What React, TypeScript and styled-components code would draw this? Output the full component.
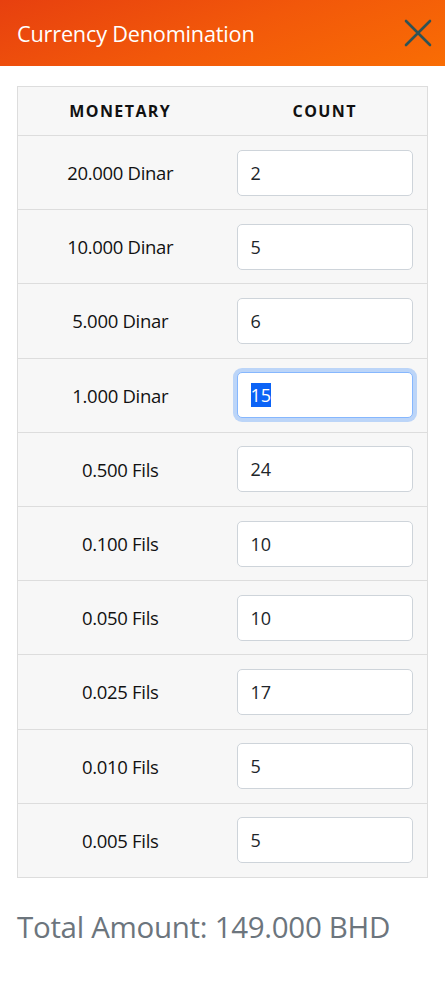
import React, { useEffect, useRef, useState } from 'react';
import styled, { createGlobalStyle } from 'styled-components';

const GlobalStyle = createGlobalStyle`
  * { box-sizing: border-box; }
  body {
    margin: 0;
    background: #ffffff;
    font-family: 'Open Sans', 'Noto Sans', sans-serif;
    color: #212529;
  }
`;

const Page = styled.div`
  width: 445px;
  min-height: 983px;
  background: #ffffff;
`;

const Header = styled.header`
  height: 66px;
  display: flex;
  align-items: center;
  justify-content: space-between;
  padding: 0 12px 0 17px;
  background: linear-gradient(160deg, #e7400f 0%, #f2580a 50%, #f96d04 100%);
`;

const Title = styled.h1`
  margin: 0;
  font-size: 21.7px;
  font-weight: 400;
  color: #ffffff;
  letter-spacing: -0.2px;
`;

const CloseButton = styled.button`
  background: transparent;
  border: none;
  padding: 0;
  width: 30px;
  height: 30px;
  display: flex;
  align-items: center;
  justify-content: center;
  cursor: pointer;
`;

const Body = styled.main`
  padding: 20px 17px 0;
`;

const Table = styled.table`
  width: 100%;
  border-collapse: collapse;
  border: 1px solid #dddddd;
  background: #f7f7f7;
`;

const HeadCell = styled.th`
  height: 49px;
  width: 50%;
  text-align: center;
  font-size: 16px;
  font-weight: 700;
  letter-spacing: 1.4px;
  color: #111111;
  border-bottom: 1px solid #dddddd;
`;

const Row = styled.tr`
  height: 74.2px;
  border-bottom: 1px solid #dddddd;
`;

const LabelCell = styled.td`
  text-align: center;
  font-size: 18.5px;
  color: #111111;
  letter-spacing: -0.3px;
`;

const InputCell = styled.td`
  padding: 0 14px;
`;

const CountInput = styled.input<{ $active?: boolean }>`
  width: 100%;
  height: 46px;
  padding: 0 13px;
  font-family: inherit;
  font-size: 18px;
  color: #212529;
  background: #ffffff;
  border: 1px solid ${p => (p.$active ? '#86b7fe' : '#ced4da')};
  border-radius: 5px;
  outline: none;
  box-shadow: ${p => (p.$active ? '0 0 0 4px rgba(13, 110, 253, 0.25)' : 'none')};

  &::selection {
    background: #0b63f6;
    color: #ffffff;
  }
`;

const Total = styled.div`
  margin-top: 28px;
  font-size: 29.5px;
  font-weight: 400;
  color: #6c757d;
  letter-spacing: -0.3px;
`;

const rows = [
  { label: '20.000 Dinar', count: '2' },
  { label: '10.000 Dinar', count: '5' },
  { label: '5.000 Dinar', count: '6' },
  { label: '1.000 Dinar', count: '15' },
  { label: '0.500 Fils', count: '24' },
  { label: '0.100 Fils', count: '10' },
  { label: '0.050 Fils', count: '10' },
  { label: '0.025 Fils', count: '17' },
  { label: '0.010 Fils', count: '5' },
  { label: '0.005 Fils', count: '5' },
];

export default function App() {
  const [counts, setCounts] = useState(rows.map(r => r.count));
  const activeRef = useRef<HTMLInputElement>(null);

  useEffect(() => {
    activeRef.current?.focus();
    activeRef.current?.select();
  }, []);

  return (
    <Page>
      <GlobalStyle />
      <Header>
        <Title>Currency Denomination</Title>
        <CloseButton aria-label="Close">
          <svg width="28" height="28" viewBox="0 0 28 28">
            <path d="M2 2 L26 26 M26 2 L2 26" stroke="#2f5355" strokeWidth="2.6" strokeLinecap="round" />
          </svg>
        </CloseButton>
      </Header>

      <Body>
        <Table>
          <thead>
            <tr>
              <HeadCell>MONETARY</HeadCell>
              <HeadCell>COUNT</HeadCell>
            </tr>
          </thead>
          <tbody>
            {rows.map((row, i) => (
              <Row key={row.label}>
                <LabelCell>{row.label}</LabelCell>
                <InputCell>
                  <CountInput
                    ref={i === 3 ? activeRef : undefined}
                    $active={i === 3}
                    value={counts[i]}
                    onChange={e => {
                      const next = [...counts];
                      next[i] = e.target.value;
                      setCounts(next);
                    }}
                  />
                </InputCell>
              </Row>
            ))}
          </tbody>
        </Table>
        <Total>Total Amount: 149.000 BHD</Total>
      </Body>
    </Page>
  );
}
